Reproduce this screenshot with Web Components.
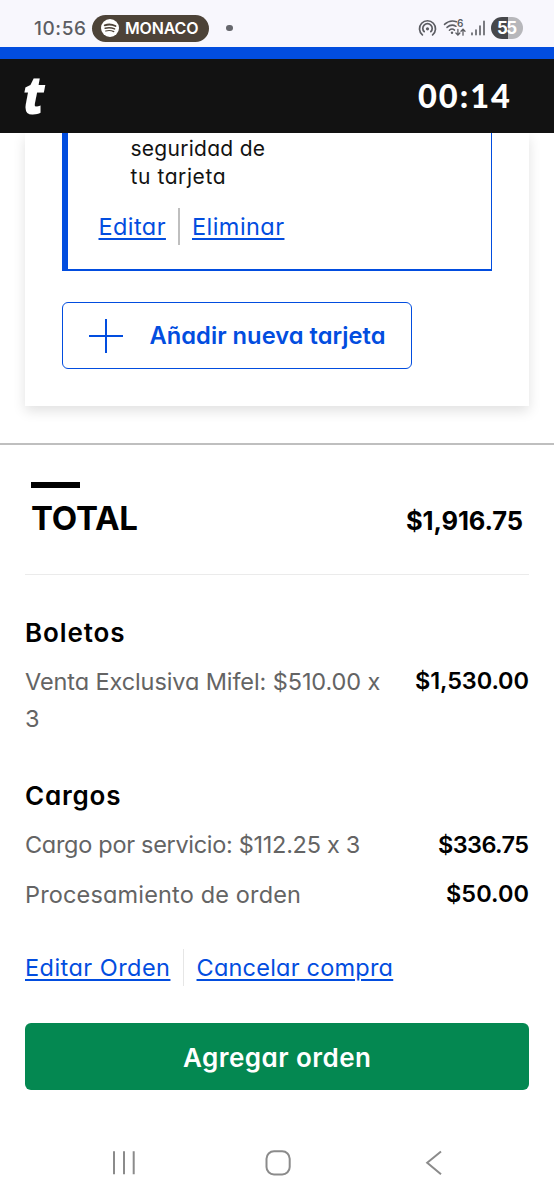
<!DOCTYPE html>
<html lang="es">
<head>
<meta charset="utf-8">
<title>Pago</title>
<style>
html,body{margin:0;padding:0;background:#fff}
body{width:554px;height:1200px;overflow:hidden;font-family:Inter,"Noto Sans",sans-serif;color:#000}
</style>
</head>
<body>
<checkout-page></checkout-page>
<script>
const make = (el, css, html) => {
  const root = el.attachShadow({mode:'open'});
  root.innerHTML = `<style>*{box-sizing:border-box}${css}</style>${html}`;
  return root;
};

/* Text run with a fixed measure: size, weight, line height and overall width. */
class TextRun extends HTMLElement {
  constructor(){ super(); make(this, `:host{display:block;flex:none;white-space:nowrap;font-feature-settings:"cv11";font-kerning:normal}`, `<slot></slot>`); }
  connectedCallback(){
    const s = this.style, a = n => this.getAttribute(n);
    s.fontSize = a('size') + 'px';
    s.fontWeight = a('weight') || 400;
    s.lineHeight = a('line') + 'px';
    if (a('fit')) {
      const r = document.createRange(); r.selectNodeContents(this);
      const gap = (a('fit') - r.getBoundingClientRect().width) / (this.textContent.length - 1);
      s.letterSpacing = gap.toFixed(3) + 'px';
      s.marginRight = (-gap).toFixed(3) + 'px';
    }
    if (a('wrap')) { s.whiteSpace = 'normal'; s.width = a('wrap') + 'px'; s.marginRight = 0; }
  }
}
customElements.define('text-run', TextRun);

class LinkPair extends HTMLElement {
  constructor(){ super(); make(this, `
    :host{display:flex;align-items:center;height:37px;color:#024ddf}
    ::slotted(text-run){text-decoration:underline;text-decoration-thickness:2px;text-underline-offset:3px}
    i{width:1.5px;height:37px;background:var(--rule,#bfbfbf);margin:0 12.5px}`,
    `<slot name="a"></slot><i></i><slot name="b"></slot>`); }
}
customElements.define('link-pair', LinkPair);

class StatusBar extends HTMLElement {
  constructor(){ super(); make(this, `
    :host{display:flex;align-items:center;height:47px;background:#f8f7fd;padding:9px 31px 0 34px;color:#5c5d63}
    .time{padding-top:1px}
    .pill{display:flex;align-items:center;width:117px;height:27px;border-radius:14px;background:#4d4338;color:#fff;margin-left:6px;padding-left:9px;gap:6px}
    .dot{width:6.5px;height:6.5px;border-radius:50%;background:#66676d;margin-left:17px}
    .icons{margin-left:auto;display:flex;align-items:center}
    svg{display:block;flex:none;overflow:visible}
    .bat{width:32px;height:22px;border-radius:11px;background:linear-gradient(90deg,#46474b 0 17.5px,#b7b7bb 17.5px);color:#fff;display:flex;justify-content:center;margin-left:5px}`,
    `<text-run class="time" size="19" weight="500" line="24" fit="52">10:56</text-run>
     <div class="pill">
       <svg width="18" height="18" viewBox="0 0 18 18"><circle cx="9" cy="9" r="9" fill="#fff"/><g fill="none" stroke="#4d4338" stroke-linecap="round"><path d="M3.7 6.3Q9.2 4.4 14.5 7" stroke-width="1.8"/><path d="M4.2 9.2Q9 7.8 13.6 9.9" stroke-width="1.5"/><path d="M4.7 12Q9 10.8 12.8 12.6" stroke-width="1.2"/></g></svg>
       <text-run size="16" weight="600" line="26" fit="73.5">MONACO</text-run>
     </div>
     <span class="dot"></span>
     <div class="icons">
       <svg width="19" height="18" viewBox="0 0 19 18" fill="none" stroke="#5c5d63" stroke-width="1.7" stroke-linecap="round"><path d="M4.4 15.9A8 8 0 1 1 14.6 15.9"/><path d="M6.2 12.7A4.7 4.7 0 1 1 12.8 12.7"/><circle cx="9.5" cy="9.8" r="1.6" fill="#5c5d63" stroke="none"/></svg>
       <svg style="margin-left:6px" width="24" height="18" viewBox="0 0 24 18" fill="none" stroke="#5c5d63" stroke-width="1.5" stroke-linecap="round"><path d="M1.5 5.4Q7 .3 13.4 2.7"/><path d="M4 8.4Q8.4 4.5 13 7.3"/><path d="M6.4 11.2Q9 9 11.5 11.1"/><circle cx="9" cy="13.7" r="1.2" fill="#5c5d63" stroke="none"/><path stroke-width="1.3" d="M14.9 10.5v5.5m-2-2 2 2.1 2-2.1M20 16.2v-6m-2 2 2-2.1 2 2.1"/><text x="14" y="8" font-family="Inter" font-size="10" font-weight="600" fill="#5c5d63" stroke="none">6</text></svg>
       <svg style="margin-left:3px" width="16" height="18" viewBox="0 0 16 18" fill="none" stroke="#5c5d63" stroke-width="1.6" stroke-linecap="round"><path d="M2 14v1.7M6 11v4.7M10 7v8.7M14 2.3v13.4"/></svg>
       <div class="bat"><text-run size="17" weight="700" line="22" fit="20">55</text-run></div>
     </div>`); }
}
customElements.define('status-bar', StatusBar);

class BrandHeader extends HTMLElement {
  constructor(){ super(); make(this, `
    :host{display:flex;justify-content:space-between;align-items:center;height:86px;border-top:12px solid #024ddf;background:#121212;color:#fff;padding:0 44px 0 23px}
    .mark{font-family:"Open Sans","Noto Sans",sans-serif;font-style:italic;margin-top:-4px;transform:scaleX(.9);transform-origin:left}
    .clock{font-family:Lato,sans-serif}`,
    `<text-run class="mark" size="53" weight="800" line="74">t</text-run>
     <text-run class="clock" size="32.5" weight="900" line="74" fit="92">00:14</text-run>`); }
}
customElements.define('brand-header', BrandHeader);

class PaymentCard extends HTMLElement {
  constructor(){ super(); make(this, `
    :host{display:block;width:504.5px;height:273px;margin-left:24.5px;background:#fff;box-shadow:0 5px 12px rgba(0,0,0,.12);padding-left:37px}
    .saved{width:430.5px;height:138px;border:solid #024ddf;border-width:0 1.5px 2px 6px;padding:2px 0 0 31px;color:#121212}
    .hint{padding-left:32px;height:56px}
    link-pair{margin-top:16.5px}
    .add{display:flex;align-items:center;width:350px;height:67px;border:1.7px solid #024ddf;border-radius:6px;margin-top:31px;padding-left:26.5px;color:#024ddf;gap:26.5px}
    svg{display:block}`,
    `<div class="saved">
       <div class="hint"><text-run size="21" line="28" fit="134.5">seguridad de</text-run><text-run size="21" line="28" fit="95">tu tarjeta</text-run></div>
       <link-pair><text-run slot="a" size="23.5" line="37" fit="67">Editar</text-run><text-run slot="b" size="23.5" line="37" fit="92">Eliminar</text-run></link-pair>
     </div>
     <div class="add">
       <svg width="34" height="34" viewBox="0 0 34 34" stroke="#024ddf" stroke-width="2"><path d="M0 17h34M17 0v34"/></svg>
       <text-run size="23.7" weight="600" line="36" fit="236">Añadir nueva tarjeta</text-run>
     </div>`); }
}
customElements.define('payment-card', PaymentCard);

class PriceRow extends HTMLElement {
  constructor(){ super(); make(this, `
    :host{display:flex;justify-content:space-between;align-items:flex-start;color:#646464}
    ::slotted([slot=price]){color:#000}`,
    `<slot></slot><slot name="price"></slot>`); }
}
customElements.define('price-row', PriceRow);

class OrderSummary extends HTMLElement {
  constructor(){ super(); make(this, `
    :host{display:block;margin-top:37px;border-top:2px solid #bfbfbf;padding:36.5px 25px 0}
    .total{display:flex;justify-content:space-between;height:93px;border-bottom:1.5px solid #ebebeb;padding:0 6px}
    .bar{width:49px;height:6px;background:#000;margin-bottom:10px}
    .sum{margin-top:19.5px}
    h2{margin:0;font:inherit}
    .go{display:flex;justify-content:center;height:67.5px;border-radius:6px;background:#048851;color:#fff;margin-top:36.5px}`,
    `<div class="total"><div><div class="bar"></div><text-run size="33" weight="700" line="40" fit="107">TOTAL</text-run></div>
       <text-run class="sum" size="25.5" weight="700" line="40" fit="117">$1,916.75</text-run></div>
     <h2 style="padding-top:39px"><text-run size="26" weight="600" line="38" fit="99.5">Boletos</text-run></h2>
     <price-row style="padding-top:11px"><text-run size="23.5" line="37" fit="379" wrap="366">Venta Exclusiva Mifel: $510.00 x 3</text-run><text-run slot="price" size="23.5" weight="600" line="36" fit="114">$1,530.00</text-run></price-row>
     <h2 style="padding-top:40.5px"><text-run size="26" weight="600" line="38" fit="95.5">Cargos</text-run></h2>
     <price-row style="padding-top:11px"><text-run size="23.5" line="37" fit="338">Cargo por servicio: $112.25 x 3</text-run><text-run slot="price" size="23.5" weight="600" line="37" fit="91">$336.75</text-run></price-row>
     <price-row style="padding-top:12.5px"><text-run size="23.5" line="37" fit="276">Procesamiento de orden</text-run><text-run slot="price" size="23.5" weight="600" line="36" fit="83">$50.00</text-run></price-row>
     <link-pair style="margin-top:36.5px;--rule:#e6e6e6"><text-run slot="a" size="23.5" line="37" fit="145">Editar Orden</text-run><text-run slot="b" size="23.5" line="37" fit="196.5">Cancelar compra</text-run></link-pair>
     <div class="go"><text-run size="26" weight="600" line="69" fit="188">Agregar orden</text-run></div>`); }
}
customElements.define('order-summary', OrderSummary);

class NavBar extends HTMLElement {
  constructor(){ super(); make(this, `
    :host{display:grid;grid-template-columns:25px 1fr 18px;justify-items:center;align-items:center;margin-top:58.5px;padding:0 111px 0 111.2px}
    svg{display:block}
    .home{margin-right:5.5px}`,
    `<svg width="26" height="28" viewBox="0 0 26 28" stroke="#8b8b8b" stroke-width="2" fill="none"><path d="M3 2.3v23M13 2.3v23M22.7 2.3v23"/></svg>
     <svg class="home" width="28" height="28" viewBox="0 0 28 28" stroke="#8b8b8b" stroke-width="2" fill="none"><rect x="2.5" y="2.3" width="23.2" height="23.2" rx="7.5"/></svg>
     <svg width="18" height="28" viewBox="0 0 18 28" stroke="#8b8b8b" stroke-width="2" fill="none"><path d="M16 2.5 2.2 13.8 16 25.3"/></svg>`); }
}
customElements.define('nav-bar', NavBar);

class CheckoutPage extends HTMLElement {
  constructor(){ super(); make(this, `
    :host{display:block;width:554px;height:1200px;overflow:hidden;background:#fff}
    main{display:block;overflow:hidden}`,
    `<status-bar></status-bar><brand-header></brand-header>
     <main><payment-card></payment-card><order-summary></order-summary></main>
     <nav-bar></nav-bar>`); }
}
customElements.define('checkout-page', CheckoutPage);
</script>
</body>
</html>
